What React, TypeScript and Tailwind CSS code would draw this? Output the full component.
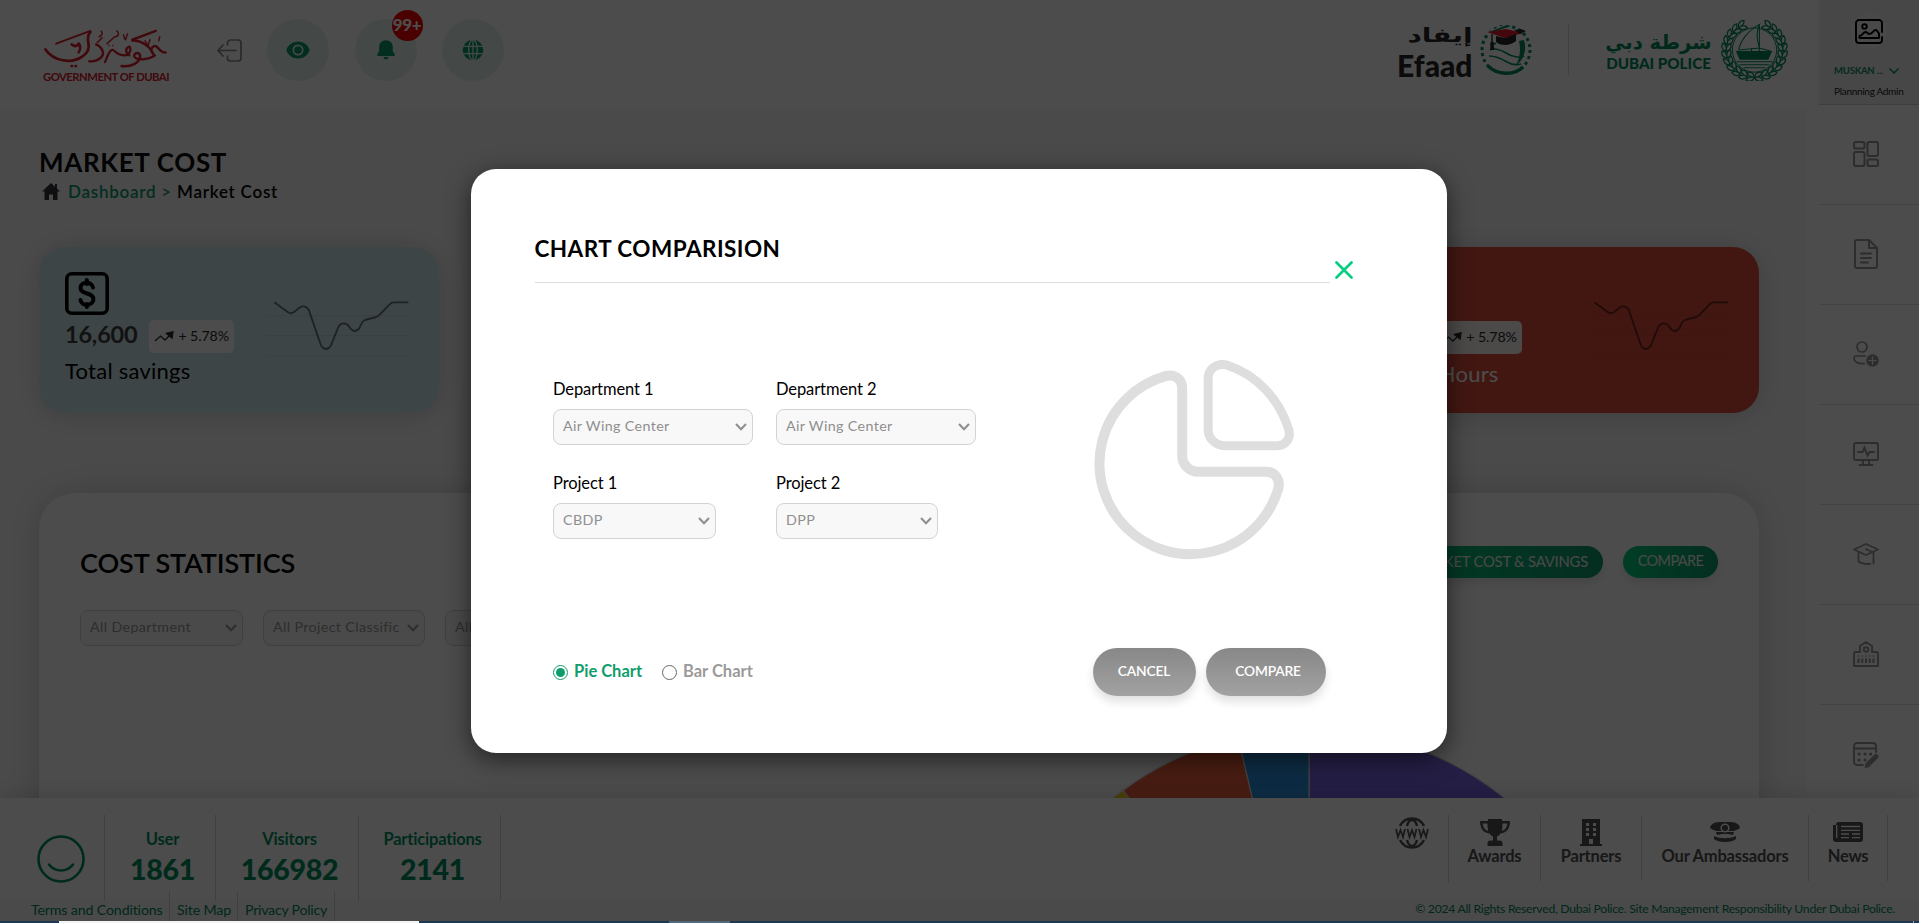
import type { ReactNode } from "react";

const SIDE_ICON = "h-[26px] w-[26px] text-[#969696]";

function RoundButton({ children }: { children: ReactNode }) {
  return (
    <div className="relative flex h-[62px] w-[62px] items-center justify-center rounded-full bg-[#e4f2ee] text-[#0a9b68]">
      {children}
    </div>
  );
}

function GovernmentLogo() {
  return (
    <div className="ml-[43px] mt-[29px] flex h-[53px] w-[125px] flex-col text-[#d8202f]">
      <svg viewBox="0 0 125 43" className="h-[42px] w-[125px] shrink-0" fill="none" stroke="currentColor" strokeLinecap="round">
        <path d="M1 21c8 12 27 15 38 7 6-4 7-9 6-13-1-5-1-9 2-12" strokeWidth="2.8" />
        <path d="M12 15 47 2" strokeWidth="2" />
        <path d="M28 16c3 2 6 2 7-1M28 38h.2M32 38h.2" strokeWidth="3" />
        <path d="M46 33c8 1 14-4 14-9-1-4-4-7-7-8M35 24c2-3 2-5 1-8" strokeWidth="2.5" />
        <path d="M62 34c3-8 6-15 9-12 4 4 7 5 12 5 5-1 6-7 4-9-4 1-5 6 0 9" strokeWidth="2.3" />
        <path d="M79 38c10 1 18-3 19-10 0-5-7-4-6 0 2 5 16 3 21-1" strokeWidth="2.6" />
        <path d="M90 12c9-1 19 6 22 15M90 11 114 2M110 24c-2-6 3-8 6-5 2 2 3 5 8 5" strokeWidth="2.5" />
        <path d="M56 8c3-1 4-4 2-6M73 8c3-1 4-4 1-6M81 6l1 4M85 5l-2 6M103 12l2 4M108 11l-2 6M117 12l1-4M64 15l8-7M54 14l5-5M70 17h.2M66 17h.2" strokeWidth="1.5" />
      </svg>
      <span className="whitespace-nowrap font-['Lato',sans-serif] text-[11.3px] leading-[11px] font-bold tracking-[-0.52px]">GOVERNMENT OF DUBAI</span>
    </div>
  );
}

function EfaadEmblem() {
  return (
    <svg viewBox="0 0 52 50" className="h-[50px] w-[52px]" fill="none">
      <circle cx="26" cy="25" r="24" stroke="#008a5e" strokeWidth="3" strokeDasharray="3 3.3" pathLength="151" />
      <path d="M9 42a24 24 0 0 0 34 1M9 10 30 1" stroke="#fff" strokeWidth="7" />
      <path d="M8 41c9 9 26 10 35 1" stroke="#008a5e" strokeWidth="3.4" />
      <path d="M9 7 27 0l4 1-15 5z" fill="#008a5e" />
      <path d="M10 25c3-2 10-1 16 3s14 5 18 3M9 31c8 0 13 3 18 6 5 3 10 3 14 2M11 20c1-2 3-2 5-1" stroke="#008a5e" strokeWidth="1.6" />
      <path d="M44 15c3 9 0 20-8 25 4-7 5-16 3-24z" fill="#008a5e" />
      <path d="M7 7 26 4l17 4-18 5z" fill="#e3182d" />
      <path d="M16 11v6c5 4 14 4 20-1V9l-11 4zM34 5l7-1 5 2-6 3z" fill="#262626" />
      <path d="M12 9v9" stroke="#262626" strokeWidth="1.4" />
      <path d="M10.500 17h3l.8 8h-4z" fill="#262626" />
    </svg>
  );
}

function PoliceEmblem() {
  const steps = Array.from({ length: 11 }, (_, i) => 172 - i * 14.6);
  return (
    <svg viewBox="0 0 68 62" className="h-[62px] w-[67px]" fill="none">
      {[1, -1].map((side) => (
        <g key={side} transform={`translate(34 31) scale(${side} 1)`} stroke="#008a5e" strokeWidth="1.3">
          {steps.map((deg) => {
            const a = (deg * Math.PI) / 180;
            return (
              <path
                key={deg}
                transform={`translate(${Math.sin(a) * 28.7} ${-Math.cos(a) * 27.5}) rotate(${deg - 90})`}
                d="M0 4C4.500 3 5.500-1 4-4 1-3-.5 0 0 4zM0 4C-4.500 3-5.500-1-4-4-1-3 .5 0 0 4z"
              />
            );
          })}
        </g>
      ))}
      <circle cx="34" cy="31" r="22.500" stroke="#008a5e" strokeWidth="1" />
      <path d="M39 5C28 11 19 22 18 31l21-2C36 20 36 11 39 5zM39 5v27M39 29l11 3M31 29v4" stroke="#008a5e" strokeWidth="1.1" />
      <path d="M15 32h37l-4 9H19z" fill="#008a5e" />
      <path d="M16 43h36M19 46h30M23 49h22" stroke="#008a5e" strokeWidth="1.1" />
    </svg>
  );
}

function Spark() {
  return (
    <svg viewBox="800 200 430 180" className="mt-[50px] mr-[29px] h-[60px] w-[143.300px] shrink-0" fill="none">
      <path d="M800 256h424M800 316h424M800 376h424" stroke="#000" strokeOpacity=".07" strokeWidth="3" />
      <path d="M824 217 862 245Q871 252 880 246L897 232Q914 222 925 238L962 345Q968 356 977 356T992 345L1014 290Q1020 279 1030 279T1045 287Q1054 302 1063 302T1078 292Q1086 272 1094 269L1128 260Q1134 258 1140 251L1168 222Q1174 216 1180 216H1222" stroke="#000" strokeOpacity=".5" strokeWidth="5.500" strokeLinecap="round" strokeLinejoin="round" />
    </svg>
  );
}

function StatCard({ tone, amount, label, light }: { tone: string; amount: string; label: string; light?: boolean }) {
  return (
    <div className={`flex h-[166px] w-[400px] justify-between rounded-[26px] pl-[26px] shadow-[0_2px_26px_rgba(0,0,0,0.16)] ${tone}`}>
      <div className="pt-[25px]">
        <svg viewBox="0 0 44 43" className={`h-[43px] w-[44px] ${light ? "text-white" : "text-black"}`} fill="none" stroke="currentColor" strokeLinecap="round">
          <rect x="1.800" y="1.800" width="40.400" height="39.400" rx="5" strokeWidth="3.600" />
          <path d="M28 15.500C27 9 15.500 9 15.500 16c0 7 13 4 13 11s-12 8-13 1M21.800 8v4M21.800 32v3" strokeWidth="4" />
        </svg>
        <div className={`flex items-center ${light ? "mt-[6px]" : "mt-[5px]"}`}>
          <span className={`pb-[4px] text-[23.500px] leading-none font-bold tracking-[-0.2px] ${light ? "text-white" : "text-[#3c3c3c]"}`}>{amount}</span>
          <span className="ml-[12px] flex h-[33px] w-[85px] items-center gap-[4px] rounded-[5px] bg-white/95 pl-[5px] text-[14.200px] leading-none text-[#2a2a2a]">
            <svg viewBox="0 0 20 11" className="h-[11px] w-[20px]" fill="none" stroke="currentColor" strokeWidth="1.300">
              <path d="M1 10 6.500 5 11 9 16 4" />
              <path d="M12.500 2.500 19 .8 18 7z" fill="currentColor" />
            </svg>
            <span className="whitespace-nowrap tracking-[-0.1px]">+ 5.78%</span>
          </span>
        </div>
        <div className={`whitespace-nowrap text-[22px] leading-none tracking-[0.25px] ${light ? "mt-[9px] text-white" : "mt-[7px] text-black"}`}>{label}</div>
      </div>
      <Spark />
    </div>
  );
}

function SelectBox({ text, size, dark }: { text: string; size: string; dark?: boolean }) {
  return (
    <div className={`flex h-[36px] items-center justify-between rounded-[8px] border border-[#d3d3d3] pl-[9px] text-[14.300px] leading-none tracking-[0.35px] ${dark ? "bg-[#f8f8f8] pr-[5px] text-[#8f8f8f]" : "bg-[#f8f8f8] pr-[5px] text-[#9a9a9a]"} ${size}`}>
      <span className="overflow-hidden whitespace-nowrap pb-[2px] leading-[18px]">{text}</span>
      <svg viewBox="0 0 12 8" className="h-[8px] w-[12px] shrink-0" fill="none" stroke="currentColor" strokeWidth="2.100">
        <path d="M1 1 6 6.300 11 1" />
      </svg>
    </div>
  );
}

function Stat({ label, value, width }: { label: string; value: string; width: string }) {
  return (
    <div className={`flex h-[85px] flex-col items-center border-r border-[#d2d2d2] pt-[16px] text-[#00915f] ${width}`}>
      <span className="text-[16.500px] leading-[17px] font-bold tracking-[-0.2px]">{label}</span>
      <span className="mt-[7px] text-[28.500px] leading-[29px] font-black tracking-[-0.3px]">{value}</span>
    </div>
  );
}

function FooterLink({ label, width, children }: { label: string; width: string; children: ReactNode }) {
  return (
    <div className={`flex h-[66px] flex-col items-center border-r border-[#d2d2d2] text-[#505050] ${width}`}>
      <div className="flex h-[32px] items-center justify-center pt-[2px]">{children}</div>
      <span className="whitespace-nowrap text-[16.500px] leading-[18px] font-bold tracking-[-0.2px]">{label}</span>
    </div>
  );
}

function SideCell({ children }: { children: ReactNode }) {
  return <div className="flex h-[100px] items-center justify-center border-b border-[#dcdcdc] pr-[6px] pb-px">{children}</div>;
}

function Sidebar() {
  return (
    <aside className="w-[100px] shrink-0">
      <div className="flex h-[105px] flex-col border-b border-[#cfcfcf] bg-[#eeeeee]">
        <div className="ml-[32px] mt-[13px] flex h-[36px] w-[36px] items-center justify-center rounded-full bg-[#f6f6f6]">
          <svg viewBox="0 0 28 25" className="h-[25px] w-[28px]" fill="none" stroke="#000" strokeWidth="1.900" strokeLinecap="round">
            <path d="M27 13V4a3 3 0 0 0-3-3H4a3 3 0 0 0-3 3v17a3 3 0 0 0 3 3h20a3 3 0 0 0 3-3v-3" />
            <circle cx="9.500" cy="7.500" r="2.300" />
            <path d="M4.500 19v-2c3 0 3.500-4 6-4 2 0 2 2 4 2 3 0 4-4 6-4s2 2 3.500 3.500v4.500z" strokeLinejoin="round" />
          </svg>
        </div>
        <div className="ml-[15px] mt-[17px] flex items-center text-[9.500px] leading-[10px] font-bold text-[#0a8f62]">
          <span className="w-[55px] whitespace-nowrap tracking-[-0.2px]">MUSKAN ...</span>
          <svg viewBox="0 0 10 6" className="h-[6px] w-[10px]" fill="none" stroke="currentColor" strokeWidth="1.500"><path d="M.5.5 5 5 9.500.5" /></svg>
        </div>
        <span className="ml-[15px] mt-[9px] whitespace-nowrap text-[10px] leading-[12px] tracking-[-0.3px] text-[#1c1c1c]">Plannning Admin</span>
      </div>
      <SideCell>
        <svg viewBox="0 0 26 26" className={SIDE_ICON} fill="none" stroke="currentColor" strokeWidth="2">
          <rect x="1" y="1" width="10.500" height="6.500" rx="1.800" /><rect x="1" y="11" width="10.500" height="14" rx="1.800" />
          <rect x="14.500" y="1" width="10.500" height="14" rx="1.800" /><rect x="14.500" y="18.500" width="10.500" height="6.500" rx="1.800" />
        </svg>
      </SideCell>
      <SideCell>
        <svg viewBox="0 0 24 30" className="h-[30px] w-[24px] text-[#969696]" fill="none" stroke="currentColor" strokeWidth="2">
          <path d="M15 1H3a2 2 0 0 0-2 2v24a2 2 0 0 0 2 2h18a2 2 0 0 0 2-2V9zM15 1v8h8" strokeLinejoin="round" />
          <path d="M7 14.500h10M7 19h10M7 23.500h7" strokeWidth="2" strokeLinecap="round" />
        </svg>
      </SideCell>
      <SideCell>
        <svg viewBox="0 0 26 26" className={SIDE_ICON} fill="none" stroke="currentColor" strokeWidth="1.700">
          <circle cx="9" cy="6" r="5" />
          <path d="M13 15H3a2 2 0 0 0-2 2c0 4 4 6 11 5.500" />
          <circle cx="19.500" cy="19.500" r="6.200" fill="currentColor" stroke="none" />
          <path d="M19.500 15.500v8M15.500 19.500h8" stroke="#fff" strokeWidth="1.200" />
        </svg>
      </SideCell>
      <SideCell>
        <svg viewBox="0 0 26 24" className="h-[24px] w-[26px] text-[#969696]" fill="none" stroke="currentColor" strokeWidth="1.900" strokeLinecap="round">
          <rect x="1" y="1" width="24" height="17" rx="1.800" />
          <path d="M5 10h4.500l2-4.500 3 8 2-3.500H21M10 18v4.500M16 18v4.500M6.500 23h13" />
        </svg>
      </SideCell>
      <SideCell>
        <svg viewBox="0 0 26 22" className="h-[22px] w-[26px] text-[#969696]" fill="none" stroke="currentColor" strokeWidth="1.800" strokeLinejoin="round" strokeLinecap="round">
          <path d="M13 1 25 6.500 13 12 1 6.500zM5.500 9v9.500c4 3 9 2.800 12 2.200M20.500 9v11.500M13 6c2 1.500 5 2 6 3" />
        </svg>
      </SideCell>
      <SideCell>
        <svg viewBox="0 0 26 26" className={SIDE_ICON} fill="none" stroke="currentColor" strokeWidth="1.900" strokeLinejoin="round">
          <path d="M1 25V13a2 2 0 0 1 2-2h4V5l6-4 6 4v6h4a2 2 0 0 1 2 2v12z" />
          <circle cx="13" cy="8.500" r="2.300" />
          <path d="M5.500 17.500V22M9.300 17.500V22M13 17.500V22M16.700 17.500V22M20.500 17.500V22M5.500 14.500v1M9.300 14.500v1M13 14.500v1M16.700 14.500v1M20.500 14.500v1" strokeWidth="2" />
        </svg>
      </SideCell>
      <div className="flex h-[100px] items-center justify-center pr-[6px] pb-px">
        <svg viewBox="0 0 26 26" className={SIDE_ICON} fill="none" stroke="currentColor" strokeWidth="1.900" strokeLinecap="round">
          <path d="M10 23H4a3 3 0 0 1-3-3V4a3 3 0 0 1 3-3h16a3 3 0 0 1 3 3v6M1 6.500h22" />
          <path d="M6 12h.1M12 12h.1M17.500 12h.1M6 18h.1M12 18h.1" strokeWidth="3.200" />
          <path d="m15 22.500 8-8" strokeWidth="5" /><path d="M11.500 26l1.500-5 4 4z" fill="currentColor" stroke="none" />
        </svg>
      </div>
    </aside>
  );
}

function Header() {
  return (
    <header className="flex h-[109px] shrink-0 bg-white">
      <GovernmentLogo />
      <svg viewBox="0 0 25 24" className="ml-[49px] mt-[39px] h-[24px] w-[25px]" fill="none" stroke="#8a8a8a" strokeWidth="1.700" strokeLinecap="round" strokeLinejoin="round">
        <path d="M10.500 6V4a3 3 0 0 1 3-3H21a3 3 0 0 1 3 3v15a3 3 0 0 1-3 3h-7.500a3 3 0 0 1-3-3v-2M19 11.500H1M6 6 1 11.500 6 17" />
      </svg>
      <div className="ml-[25px] mt-[19px] flex gap-[25.500px]">
        <RoundButton>
          <svg viewBox="0 0 24 18" className="h-[18px] w-[24px]"><path fill="currentColor" d="M12 .5C6.500.5 2 4 .3 9 2 14 6.500 17.500 12 17.500S22 14 23.700 9C22 4 17.500.5 12 .5z" /><circle cx="12" cy="9" r="4.700" fill="none" stroke="#e4f2ee" strokeWidth="1.700" /></svg>
        </RoundButton>
        <RoundButton>
          <svg viewBox="0 0 18 20" className="h-[20px] w-[18px]" fill="currentColor"><path d="M9 .3c-4 0-6.800 2.800-6.800 6.700v4.500L.3 14v2h17.400v-2l-1.900-2.500V7C15.800 3.100 13 .3 9 .3zM6.500 17h5c-.3 3.200-4.700 3.200-5 0z" /></svg>
          <span className="absolute -top-[9px] left-[37px] flex h-[31px] w-[31px] items-center justify-center rounded-full bg-[#f80000] pb-[2px] text-[17px] leading-none font-black tracking-[-0.4px] text-white">99+</span>
        </RoundButton>
        <RoundButton>
          <svg viewBox="0 0 22 22" className="h-[22px] w-[22px]"><circle cx="11" cy="11" r="10.300" fill="currentColor" /><g fill="none" stroke="#e4f2ee" strokeWidth="1.300"><ellipse cx="11" cy="11" rx="4.300" ry="10.500" /><path d="M0 7.300h22M0 14.700h22M11 0v22" /></g></svg>
        </RoundButton>
      </div>
      <div className="ml-auto mr-[19px] mt-[19px] flex h-[62px] items-center">
        <div className="flex w-[75px] flex-col items-end font-bold text-[#262626]">
          <span lang="ar" dir="rtl" className="origin-right scale-x-140 whitespace-nowrap font-['DejaVu_Sans',sans-serif] text-[20px] leading-[26px]">إيفاد</span>
          <span className="mt-[3px] font-['Lato',sans-serif] text-[30px] leading-[28px] font-black">Efaad</span>
        </div>
        <div className="ml-[7px]"><EfaadEmblem /></div>
        <div className="ml-[36px] h-[50px] w-[1.500px] bg-[#d8d8d8]" />
        <div className="ml-[37px] flex w-[105px] flex-col items-center font-bold text-[#008a5e]">
          <span lang="ar" dir="rtl" className="whitespace-nowrap font-['DejaVu_Sans',sans-serif] text-[19.700px] leading-[27px]">شرطة دبي</span>
          <span className="whitespace-nowrap font-['Lato',sans-serif] text-[15.200px] leading-[15px] font-black">DUBAI POLICE</span>
        </div>
        <div className="ml-[10px]"><PoliceEmblem /></div>
      </div>
    </header>
  );
}

function CostPanel() {
  return (
    <section className="relative mt-[80px] h-[420px] w-[1720px] rounded-[36px] bg-white px-[41px] pt-[53px] shadow-[0_0_34px_rgba(0,0,0,0.16)]">
      <div className="flex items-start justify-between">
        <h2 className="mt-[3px] whitespace-nowrap text-[27px] leading-none font-semibold tracking-[-0.1px] text-black">COST STATISTICS</h2>
        <div className="flex gap-[20px] leading-none text-[#f4f4f4]">
          <span className="flex h-[32px] w-[240px] items-center justify-end whitespace-nowrap rounded-full bg-linear-to-r from-[#04cf80] to-[#0f9a6c] pr-[15px] pb-[2px] text-[14.800px] tracking-[-0.2px] shadow-[0_5px_10px_rgba(0,0,0,0.1)]">MARKET COST &amp; SAVINGS</span>
          <span className="flex h-[32px] w-[95px] items-center justify-center rounded-full bg-linear-to-r from-[#04cf80] to-[#0f9a6c] pb-[2px] text-[14.500px] tracking-[-0.6px] shadow-[0_5px_10px_rgba(0,0,0,0.1)]">COMPARE</span>
        </div>
      </div>
      <div className="mt-[32px] flex gap-[20px]">
        <SelectBox text="All Department" size="w-[163px]" />
        <SelectBox text="All Project Classific" size="w-[162px]" />
        <SelectBox text="All" size="w-[162px]" />
      </div>
      <svg viewBox="960 728 700 312" className="absolute top-[235px] left-[921px] h-[312px] w-[700px]" stroke="#ddd" strokeWidth="1.200">
        <path d="M1309 1040V729A311 311 0 0 1 1620 1040z" fill="#7c65e8" />
        <path d="M1309 1040 1238 737.600A311 311 0 0 1 1309 729z" fill="#2c93e2" />
        <path d="M1309 1040 1123 790.400A311 311 0 0 1 1238 737.600z" fill="#f0623e" />
        <path d="M1309 1040 1017 932A311 311 0 0 1 1123 790.400z" fill="#f2d410" />
      </svg>
    </section>
  );
}

function Footer() {
  return (
    <footer className="relative h-[125px] w-full shrink-0 bg-white shadow-[0_0_24px_rgba(0,0,0,0.16)]">
      <div className="flex h-[102px] pt-[17px]">
        <div className="flex h-[85px] w-[105px] border-r border-[#d2d2d2] pl-[37px] pt-[20px]">
          <svg viewBox="0 0 48 48" className="h-[48px] w-[48px]" fill="none" stroke="#00915f" strokeWidth="2.600" strokeLinecap="round"><circle cx="24" cy="24" r="22.500" /><path d="M12 29.500c6 8 18 8 24 0" /></svg>
        </div>
        <Stat label="User" value="1861" width="w-[111px] pr-0 pl-[5px]" />
        <Stat label="Visitors" value="166982" width="w-[143px] pl-[5px]" />
        <Stat label="Participations" value="2141" width="w-[142px] pl-[6px]" />
        <div className="ml-auto mr-[31px] flex">
          <div className="flex h-[68px] w-[54px] border-r border-[#d2d2d2] pt-[2px] text-[#505050]">
            <svg viewBox="0 0 34 32" className="h-[32px] w-[34px]" fill="none" stroke="currentColor" strokeWidth="2.400">
              <path d="M5 9C10-1 24-1 29 9M5 23c5 10 19 10 24 0M12 9c2-8 8-8 10 0M12 23c2 8 8 8 10 0" />
              <path d="m1 12 2 8 2.500-7L8 20l2-8M12.500 12l2 8 2.500-7 2.500 7 2-8M24 12l2 8 2.500-7 2.500 7 2-8" strokeWidth="1.700" />
            </svg>
          </div>
          <FooterLink label="Awards" width="w-[92px]">
            <svg viewBox="0 0 30 27" className="h-[27px] w-[30px]" fill="currentColor"><path d="M8 0h14v2h8c0 7-3 12-9.500 12.500-1 1.500-2.500 2.500-3.500 3v4h2.500a3 3 0 0 1 3 3V27h-15v-2.500a3 3 0 0 1 3-3H13v-4c-1-.5-2.500-1.500-3.500-3C3 14 0 9 0 2h8zM2.700 4.500C3 8.500 5 11 8.300 12A22 22 0 0 1 7.500 4.500zm24.600 0h-4.800a22 22 0 0 1-.8 7.500c3.300-1 5.300-3.500 5.600-7.500z" /></svg>
          </FooterLink>
          <FooterLink label="Partners" width="w-[101px]">
            <svg viewBox="0 0 22 27" className="h-[27px] w-[22px]"><path fill="currentColor" d="M2 0h18v25h2v2H0v-2h2z" /><path fill="#fff" d="M6 4h3v3H6zM13 4h3v3h-3zM6 9h3v3H6zM13 9h3v3h-3zM6 14h3v3H6zM13 14h3v3h-3zM9 20h4v5H9z" /></svg>
          </FooterLink>
          <FooterLink label="Our Ambassadors" width="w-[167px]">
            <svg viewBox="0 0 30 20" className="h-[20px] w-[30px]"><path fill="currentColor" d="M0 5C3-1 10 0 15 0s12-1 15 5c0 2-4 3-6 4H6C4 8 0 7 0 5zM6 10h18l-1 3c-4-1.500-12-1.500-16 0zM4 14c6 3 16 3 22 0v3c-4 4-18 4-22 0z" /><circle cx="15" cy="6" r="3.800" fill="currentColor" stroke="#fff" strokeWidth="1.500" /></svg>
          </FooterLink>
          <FooterLink label="News" width="w-[79px]">
            <svg viewBox="0 0 30 20" className="h-[20px] w-[30px]"><path fill="currentColor" d="M6 0h21a3 3 0 0 1 3 3v14a3 3 0 0 1-3 3H3a3 3 0 0 1-3-3V3h3V2a3 3 0 0 1 3-2z" /><path d="M8 4.500h19M8 8.300h19M8 12h8M19 12h8M8 15.700h8M19 15.700h8M3.700 3v13" stroke="#fff" strokeWidth="1.300" /></svg>
          </FooterLink>
        </div>
      </div>
      <div className="flex h-[23px] bg-[#f8f8f8] pl-[23px] text-[#00875a]">
        <div className="-mt-[8px] flex text-[14.200px] leading-[18px] tracking-[-0.15px]">
          <span className="h-[31px] w-[147px] whitespace-nowrap border-r border-[#d2d2d2] pl-[8px] pt-[9px]">Terms and Conditions</span>
          <span className="h-[31px] w-[68px] whitespace-nowrap border-r border-[#d2d2d2] pl-[7px] pt-[9px]">Site Map</span>
          <span className="h-[31px] w-[97px] whitespace-nowrap border-r border-[#d2d2d2] pl-[7px] pt-[9px] tracking-[-0.25px]">Privacy Policy</span>
        </div>
        <span className="ml-auto mr-[24px] whitespace-nowrap text-[12.200px] leading-[18px] tracking-[-0.270px]">© 2024 All Rights Reserved, Dubai Police. Site Management Responsibility Under Dubai Police.</span>
      </div>
    </footer>
  );
}

function Field({ label, value, size }: { label: string; value: string; size: string }) {
  return (
    <div className="w-[223px]">
      <div className="mb-[11px] text-[16.500px] leading-[17px] tracking-[-0.1px] text-black">{label}</div>
      <SelectBox text={value} size={size} dark />
    </div>
  );
}

function Dialog() {
  return (
    <div className="h-[584px] w-[976px] rounded-[25px] bg-white shadow-[0_6px_24px_0px_rgba(0,0,0,0.55)]">
      <div className="flex h-[114px] items-end pl-[63.500px]">
        <div className="h-[52px] w-[795px] border-b border-[#dedede]">
          <h1 className="pt-[6px] text-[22.500px] leading-[23px] font-bold tracking-[0.45px] text-black">CHART COMPARISION</h1>
        </div>
        <svg viewBox="0 0 18 18" className="mb-[4px] ml-[5.500px] h-[18px] w-[18px]" stroke="#04cf80" strokeWidth="2.700" strokeLinecap="round"><path d="m1.500 1.500 15 15m0-15-15 15" /></svg>
      </div>
      <div className="flex pl-[82px]">
        <div className="flex w-[541px] flex-col gap-[30px] pt-[98px]">
          <div className="flex">
            <Field label="Department 1" value="Air Wing Center" size="w-[200px]" />
            <Field label="Department 2" value="Air Wing Center" size="w-[200px]" />
          </div>
          <div className="flex">
            <Field label="Project 1" value="CBDP" size="w-[163px]" />
            <Field label="Project 2" value="DPP" size="w-[162px]" />
          </div>
        </div>
        <svg viewBox="283 600 601 600" className="mt-[77px] h-[200px] w-[200px] shrink-0" fill="none" stroke="#dedede" strokeWidth="30">
          <path d="M548 685V888A48 47 0 0 0 596 935H800C826 935 843 957 837 985A274 273 0 1 1 497 648C525 640 548 657 548 685Z" />
          <path d="M626 655V808A50 49 0 0 0 676 857H832C858 857 876 836 868 808C840 718 775 645 680 614C650 608 626 628 626 655Z" strokeWidth="27" />
        </svg>
      </div>
      <div className="mt-[88px] flex items-center pl-[82px] text-[16.500px] leading-none font-bold">
        <span className="mr-[6px] flex h-[15px] w-[15px] items-center justify-center rounded-full border-[1.500px] border-[#0f9d6b]"><span className="h-[9px] w-[9px] rounded-full bg-[#0f9d6b]" /></span>
        <span className="w-[88px] whitespace-nowrap pb-[2px] text-[#0f9d6b]">Pie Chart</span>
        <span className="mr-[6px] h-[15px] w-[15px] rounded-full border border-[#666]" />
        <span className="whitespace-nowrap pb-[2px] text-[#9a9a9a]">Bar Chart</span>
        <div className="ml-auto mr-[121.500px] flex gap-[10px] text-[13.800px] font-semibold tracking-[-0.2px] text-white">
          <button className="h-[48px] w-[103px] rounded-full bg-linear-to-b from-[#888] to-[#a2a2a2] pb-[2px] shadow-[0_6px_10px_rgba(0,0,0,0.12)]">CANCEL</button>
          <button className="h-[48px] w-[120px] rounded-full bg-linear-to-b from-[#888] to-[#a2a2a2] pb-[2px] pl-[5px] shadow-[0_6px_10px_rgba(0,0,0,0.12)]">COMPARE</button>
        </div>
      </div>
    </div>
  );
}

export default function App() {
  return (
    <div className="relative flex h-[923px] w-[1919px] flex-col overflow-hidden bg-white font-['Lato','Noto_Sans',sans-serif]">
      <div className="flex h-[798px] shrink-0">
        <div className="flex w-[1807px] shrink-0 flex-col">
          <Header />
          <main className="h-[689px] overflow-hidden bg-[#f8f8f8] pl-[39px]">
            <h1 className="mt-[40px] text-[26px] leading-none font-bold tracking-[0.65px] text-[#0c0c0c]">MARKET COST</h1>
            <div className="mt-[7px] flex h-[18px] items-center text-[17px] leading-none font-semibold">
              <svg viewBox="0 0 18 17" className="ml-[3px] mr-[8px] h-[17px] w-[18px]" fill="#33353c"><path d="M9 0 0 8.500h2.500V17H7v-5.500h4V17h4.500V8.500H18L15 5.600V1h-2v2.700z" /></svg>
              <span className="tracking-[0.75px] text-[#0a9b68]">Dashboard &gt;</span>
              <span className="ml-[5px] tracking-[0.75px] text-black">Market Cost</span>
            </div>
            <div className="mt-[47px] flex gap-[40px]">
              <StatCard tone="bg-[#cfe6ea]" amount="16,600" label="Total savings" />
              <div className="h-[166px] w-[400px] rounded-[26px] bg-white" />
              <div className="h-[166px] w-[400px] rounded-[26px] bg-white" />
              <StatCard tone="bg-[#dc4e3c]" amount="166" label="Total Hours" light />
            </div>
            <CostPanel />
          </main>
        </div>
        <div className="w-[12px] shrink-0" />
        <Sidebar />
      </div>
      <Footer />
      <div className="absolute inset-0 flex items-center justify-center bg-black/70 pr-px pb-px">
        <Dialog />
      </div>
      <div className="absolute bottom-0 left-0 flex h-[2px] w-full bg-[#1d3850]">
        <div className="ml-[59px] w-[360px] bg-[#f4f4f4]" />
        <div className="ml-[250px] w-[61px] bg-[#536878]" />
        <div className="ml-auto mr-[5px] w-px bg-[#a0a0a0]" />
      </div>
    </div>
  );
}
